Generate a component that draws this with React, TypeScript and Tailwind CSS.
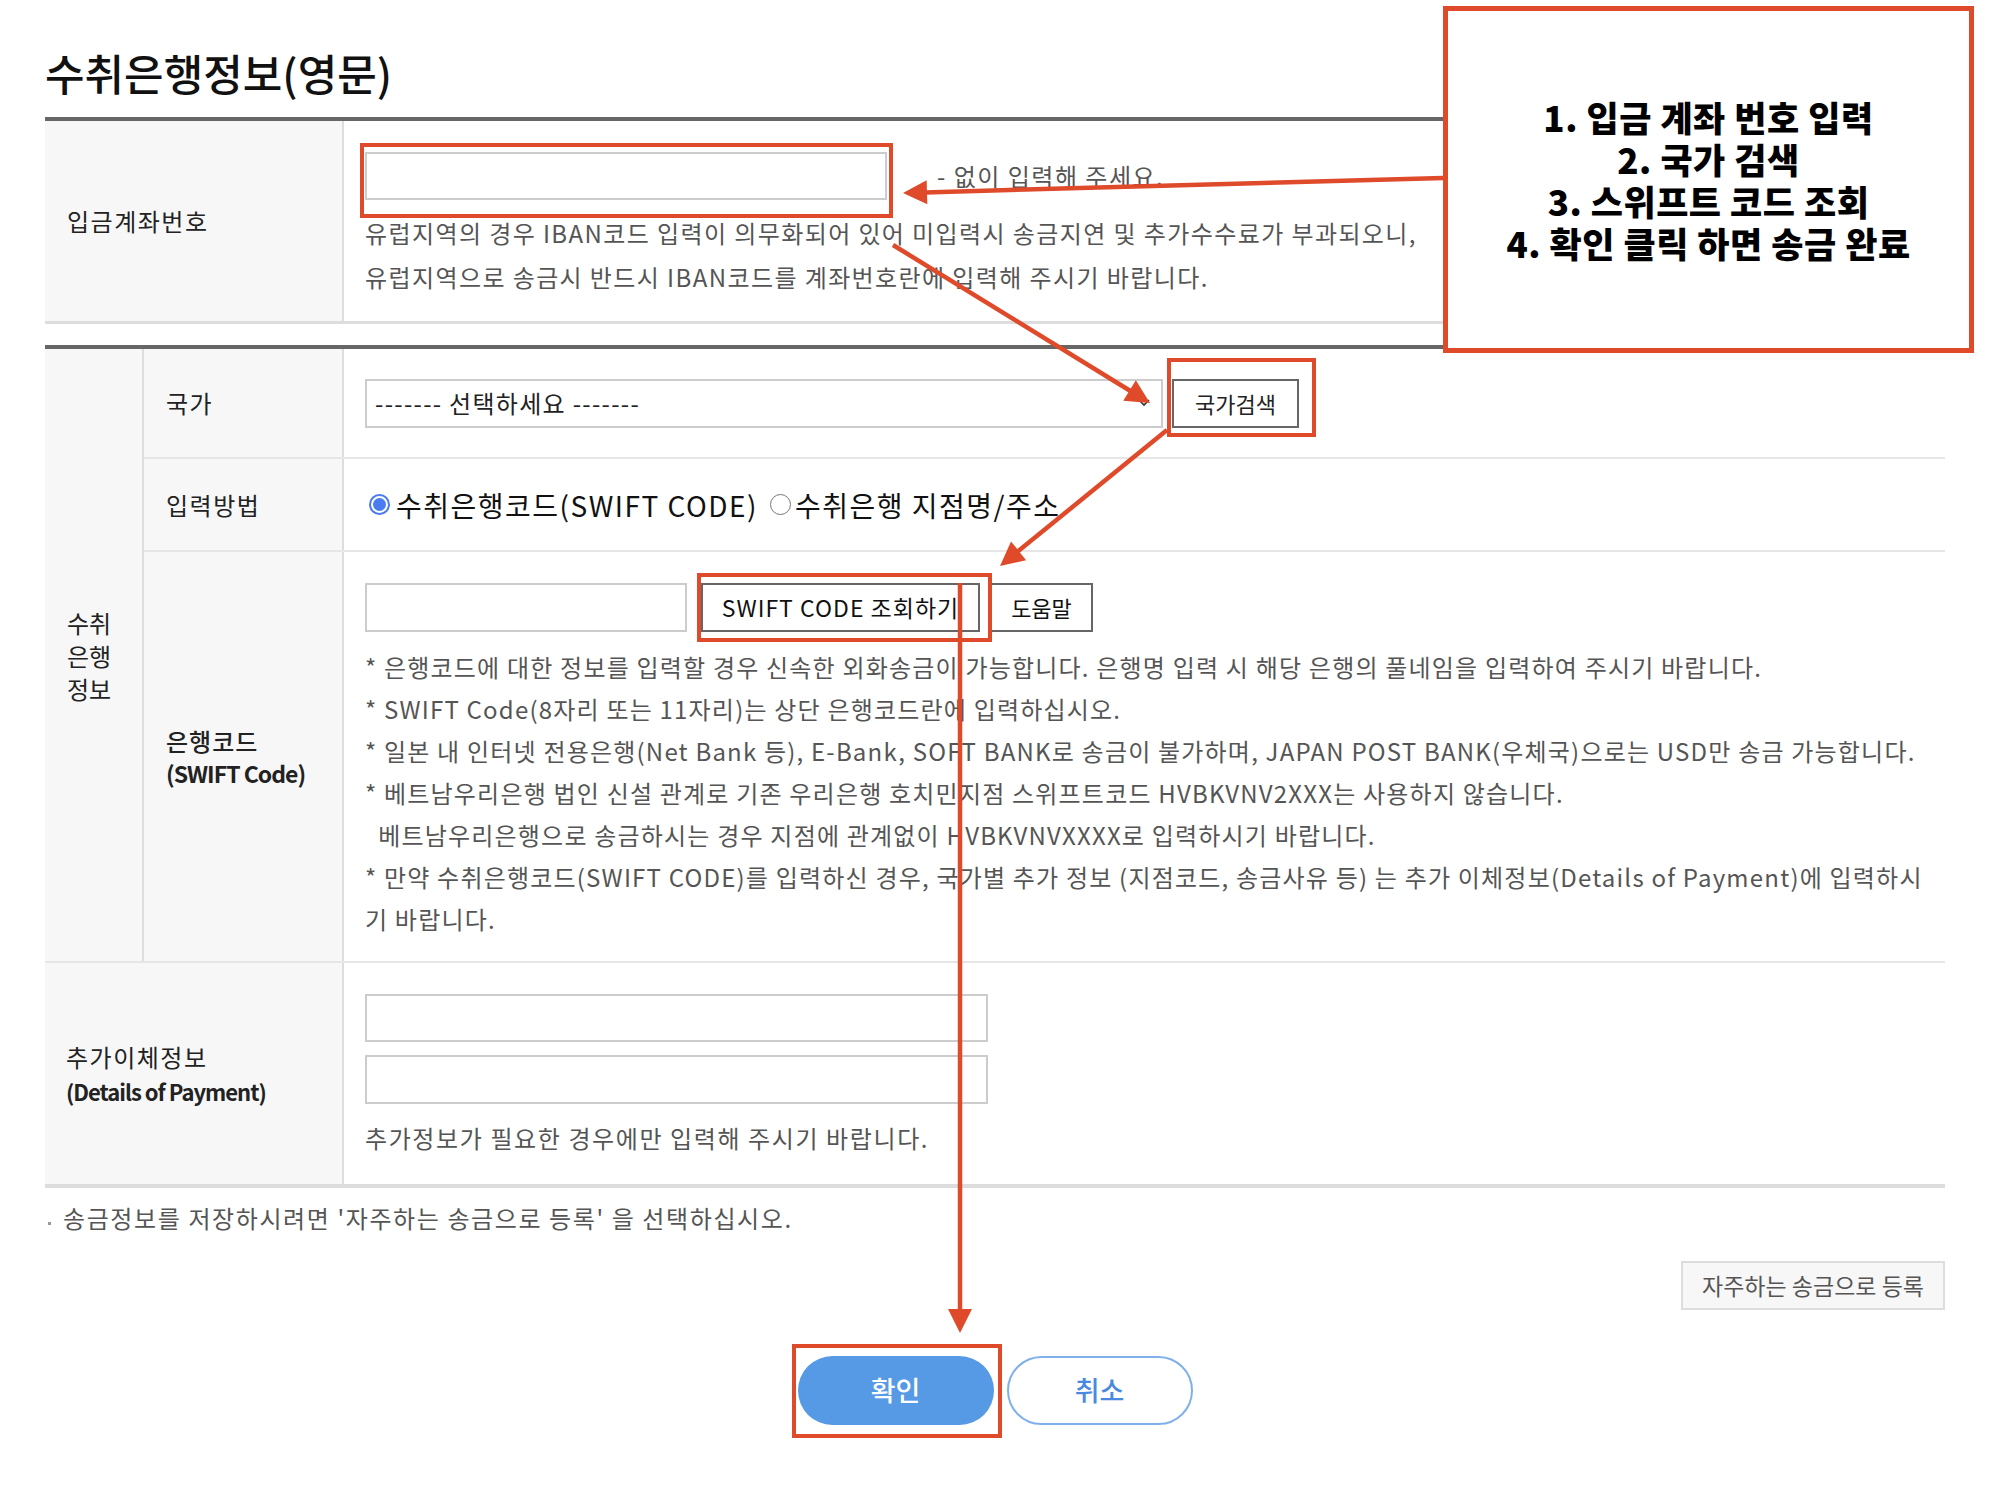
import React from 'react';

const RED = '#de4a2a';

// arrow line + triangular head, page coords
const Arrow: React.FC<{ x1: number; y1: number; x2: number; y2: number }> = ({ x1, y1, x2, y2 }) => {
  const dx = x2 - x1;
  const dy = y2 - y1;
  const len = Math.sqrt(dx * dx + dy * dy);
  const ux = dx / len;
  const uy = dy / len;
  const head = 24;
  const half = 12;
  const bx = x2 - ux * head;
  const by = y2 - uy * head;
  const pts = `${x2},${y2} ${bx - uy * half},${by + ux * half} ${bx + uy * half},${by - ux * half}`;
  return (
    <g>
      <line x1={x1} y1={y1} x2={bx + ux * 2} y2={by + uy * 2} stroke={RED} strokeWidth={4.5} />
      <polygon points={pts} fill={RED} />
    </g>
  );
};

const Radio: React.FC<{ checked?: boolean }> = ({ checked }) =>
  checked ? (
    <span className="flex h-[21px] w-[21px] shrink-0 items-center justify-center rounded-full border-2 border-[#4a7cf0] bg-white">
      <span className="h-[13px] w-[13px] rounded-full bg-[#4a7cf0]" />
    </span>
  ) : (
    <span className="block h-[21px] w-[21px] shrink-0 rounded-full border-[1.5px] border-[#777] bg-white" />
  );

const notes = [
  '* 은행코드에 대한 정보를 입력할 경우 신속한 외화송금이 가능합니다. 은행명 입력 시 해당 은행의 풀네임을 입력하여 주시기 바랍니다.',
  '* SWIFT Code(8자리 또는 11자리)는 상단 은행코드란에 입력하십시오.',
  '* 일본 내 인터넷 전용은행(Net Bank 등), E-Bank, SOFT BANK로 송금이 불가하며, JAPAN POST BANK(우체국)으로는 USD만 송금 가능합니다.',
  '* 베트남우리은행 법인 신설 관계로 기존 우리은행 호치민지점 스위프트코드 HVBKVNV2XXX는 사용하지 않습니다.',
  '\u00a0\u00a0베트남우리은행으로 송금하시는 경우 지점에 관계없이 HVBKVNVXXXX로 입력하시기 바랍니다.',
  '* 만약 수취은행코드(SWIFT CODE)를 입력하신 경우, 국가별 추가 정보 (지점코드, 송금사유 등) 는 추가 이체정보(Details of Payment)에 입력하시',
  '기 바랍니다.',
];

export default function App() {
  return (
    <div className="relative h-[1510px] w-[2010px] overflow-hidden bg-white font-['Noto_Sans_CJK_KR','Noto_Sans',sans-serif] text-[#222]">
      {/* Title */}
      <div className="h-[117px] pl-[45px] pt-[44px]">
        <h1 className="text-[43px] font-medium leading-[56px] text-[#111]">수취은행정보(영문)</h1>
      </div>

      <div className="ml-[45px] w-[1900px]">
        {/* 입금계좌번호 */}
        <div className="flex h-[207px] border-t-4 border-b-[3px] border-t-[#666] border-b-[#ddd]">
          <div className="flex w-[299px] items-center border-r-2 border-[#ddd] bg-[#f7f7f7] pl-[22px] text-[24px] tracking-[1.5px]">
            입금계좌번호
          </div>
          <div className="flex-1 pl-[21px] pt-[31px]">
            <div className="flex items-center">
              <div className="h-[48px] w-[522px] border-2 border-[#ccc] bg-white" />
              <span className="ml-[50px] text-[24px] tracking-[1.5px] text-[#555]">- 없이 입력해 주세요.</span>
            </div>
            <div className="mt-[11px] text-[24px] leading-[44px] tracking-[1.4px] text-[#555]">
              <p>유럽지역의 경우 IBAN코드 입력이 의무화되어 있어 미입력시 송금지연 및 추가수수료가 부과되오니,</p>
              <p>유럽지역으로 송금시 반드시 IBAN코드를 계좌번호란에 입력해 주시기 바랍니다.</p>
            </div>
          </div>
        </div>

        {/* 수취은행정보 */}
        <div className="mt-[21px] flex border-t-4 border-[#666]">
          <div className="flex w-[99px] items-center border-r-2 border-[#ddd] bg-[#f7f7f7] pl-[22px] text-[24px] leading-[33px]">
            <div>
              <p>수취</p>
              <p>은행</p>
              <p>정보</p>
            </div>
          </div>
          <div className="flex-1">
            {/* 국가 */}
            <div className="flex h-[110px] border-b-2 border-[#e6e6e6]">
              <div className="flex w-[200px] items-center border-r-2 border-[#ddd] bg-[#f7f7f7] pl-[22px] text-[24px] tracking-[1.5px]">
                국가
              </div>
              <div className="flex flex-1 items-center gap-[9px] pl-[21px]">
                <div className="flex h-[49px] w-[798px] items-center justify-between border-2 border-[#ccc] bg-white pl-[8px] pr-[10px] text-[24px] tracking-[1.3px]">
                  <span>------- 선택하세요 -------</span>
                  <svg width="14" height="10" viewBox="0 0 14 10" fill="none" stroke="#333" strokeWidth="1.6">
                    <path d="M2 2l5 5 5-5" />
                  </svg>
                </div>
                <button className="h-[49px] w-[127px] border-2 border-[#666] bg-white text-[22px] text-[#222]">
                  국가검색
                </button>
              </div>
            </div>

            {/* 입력방법 */}
            <div className="flex h-[93px] border-b-2 border-[#e6e6e6]">
              <div className="flex w-[200px] items-center border-r-2 border-[#ddd] bg-[#f7f7f7] pl-[22px] text-[24px] tracking-[1.5px]">
                입력방법
              </div>
              <div className="flex flex-1 items-center pl-[25px] text-[28px] tracking-[1.5px] text-[#111]">
                <Radio checked />
                <span className="ml-[6px]">수취은행코드(SWIFT CODE)</span>
                <span className="ml-[12px] flex">
                  <Radio />
                </span>
                <span className="ml-[4px]">수취은행 지점명/주소</span>
              </div>
            </div>

            {/* 은행코드 */}
            <div className="flex h-[409px]">
              <div className="flex w-[200px] items-center border-r-2 border-[#ddd] bg-[#f7f7f7] pl-[22px] leading-[33px]">
                <div>
                  <p className="text-[24px] font-medium tracking-[1px]">은행코드</p>
                  <p className="text-[23px] font-bold tracking-[-1px]">(SWIFT Code)</p>
                </div>
              </div>
              <div className="flex-1 pl-[21px] pt-[31px]">
                <div className="flex items-center">
                  <div className="h-[49px] w-[322px] border-2 border-[#ccc] bg-white" />
                  <button className="ml-[14px] h-[49px] w-[279px] border-2 border-[#666] bg-white text-[23px] tracking-[1px] text-[#111]">
                    SWIFT CODE 조회하기
                  </button>
                  <button className="ml-[10px] h-[49px] w-[103px] border-2 border-[#666] bg-white text-[22px] text-[#111]">
                    도움말
                  </button>
                </div>
                <div className="mt-[14px] whitespace-nowrap text-[24px] leading-[42px] tracking-[1.2px] text-[#555]">
                  {notes.map((n, i) => (
                    <p key={i}>{n}</p>
                  ))}
                </div>
              </div>
            </div>
          </div>
        </div>

        {/* 추가이체정보 */}
        <div className="flex h-[227px] border-t-2 border-b-4 border-t-[#e6e6e6] border-b-[#ddd]">
          <div className="flex w-[299px] items-center border-r-2 border-[#ddd] bg-[#f7f7f7] pl-[21px] leading-[34px]">
            <div>
              <p className="text-[24px] tracking-[1.5px]">추가이체정보</p>
              <p className="text-[22px] font-bold tracking-[-1px]">(Details of Payment)</p>
            </div>
          </div>
          <div className="flex-1 pl-[21px] pt-[31px]">
            <div className="h-[48px] w-[623px] border-2 border-[#ccc] bg-white" />
            <div className="mt-[13px] h-[49px] w-[623px] border-2 border-[#ccc] bg-white" />
            <p className="mt-[13px] text-[24px] leading-[42px] tracking-[1.6px] text-[#555]">
              추가정보가 필요한 경우에만 입력해 주시기 바랍니다.
            </p>
          </div>
        </div>

        <div className="mt-[12px] flex items-center text-[24px] leading-[36px] tracking-[1.6px] text-[#555]">
          <span className="ml-[3px] mr-[12px] mt-[10px] h-[3px] w-[3px] bg-[#999]" />
          <span>송금정보를 저장하시려면 '자주하는 송금으로 등록' 을 선택하십시오.</span>
        </div>

        <div className="mt-[25px] flex justify-end">
          <button className="h-[49px] w-[264px] border-2 border-[#ddd] bg-[#f7f7f7] text-[23px] text-[#555]">
            자주하는 송금으로 등록
          </button>
        </div>

        <div className="mt-[46px] flex justify-center gap-[13px]">
          <button className="h-[69px] w-[196px] rounded-full bg-[#5699e5] text-[27px] font-medium text-white">
            확인
          </button>
          <button className="h-[69px] w-[186px] rounded-full border-2 border-[#7fb0ea] bg-white text-[27px] font-medium text-[#4a8ade]">
            취소
          </button>
        </div>
      </div>

      {/* 안내 박스 */}
      <div className="absolute left-[1443px] top-[6px] flex h-[347px] w-[531px] items-center justify-center border-[5px] border-[#de4a2a] bg-white">
        <div className="text-center text-[35px] font-extrabold leading-[42px] tracking-[0.5px] text-black">
          <p>1. 입금 계좌 번호 입력</p>
          <p>2. 국가 검색</p>
          <p>3. 스위프트 코드 조회</p>
          <p>4. 확인 클릭 하면 송금 완료</p>
        </div>
      </div>

      {/* 주석 화살표 / 박스 */}
      <svg className="pointer-events-none absolute left-0 top-0" width="2010" height="1510">
        <rect x="362" y="145" width="529" height="71" fill="none" stroke={RED} strokeWidth="4" />
        <rect x="1169" y="360" width="145" height="75" fill="none" stroke={RED} strokeWidth="4" />
        <rect x="699" y="575" width="291" height="65" fill="none" stroke={RED} strokeWidth="4" />
        <rect x="794" y="1346" width="206" height="90" fill="none" stroke={RED} strokeWidth="4" />
        <Arrow x1={1443} y1={178} x2={903} y2={193} />
        <Arrow x1={893} y1={245} x2={1150} y2={403} />
        <Arrow x1={1167} y1={430} x2={1000} y2={566} />
        <Arrow x1={960} y1={583} x2={960} y2={1333} />
      </svg>
    </div>
  );
}
